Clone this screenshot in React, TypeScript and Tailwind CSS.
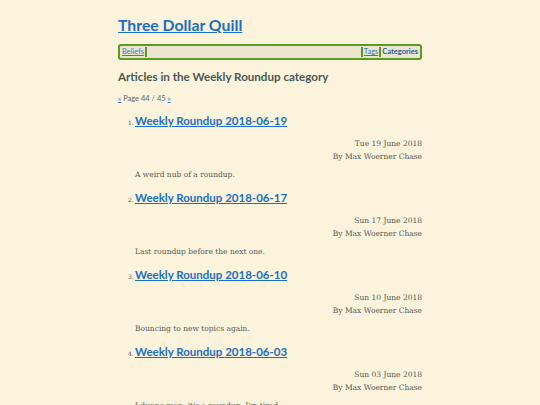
import React from "react";

const items = [
  { t: "Weekly Roundup 2018-06-19", d: "Tue 19 June 2018", s: "A weird nub of a roundup." },
  { t: "Weekly Roundup 2018-06-17", d: "Sun 17 June 2018", s: "Last roundup before the next one." },
  { t: "Weekly Roundup 2018-06-10", d: "Sun 10 June 2018", s: "Bouncing to new topics again." },
  { t: "Weekly Roundup 2018-06-03", d: "Sun 03 June 2018", s: "I dunno man, it's a roundup. I'm tired." },
];

const sans = "font-['Lato','Open_Sans',sans-serif]";
const serif = "font-['DejaVu_Serif','Liberation_Serif',serif]";

export default function App() {
  return (
    <div className="min-h-[405px] w-[540px] bg-[#fbf3db] overflow-hidden">
      <div className="mx-auto w-[304px] pt-[14px]">
        <h1 className={`${sans} text-[15.8px] font-bold leading-[22px] text-[#1c6fc4] underline`}>
          Three Dollar Quill
        </h1>
        <nav className={`${sans} mt-[8px] flex h-[16px] items-center rounded-[3px] border-[2px] border-[#5a9a1e] bg-[#ebe4cf] px-[2px] text-[7.5px] leading-none`}>
          <a className="text-[#3c7bbf] underline">Beliefs</a>
          <span className="ml-[1px] h-[10px] w-[2px] bg-[#5a9a1e]" />
          <span className="flex-1" />
          <span className="mr-[1px] h-[10px] w-[2px] bg-[#5a9a1e]" />
          <a className="text-[#3c7bbf] underline">Tags</a>
          <span className="mx-[1px] h-[10px] w-[2px] bg-[#5a9a1e]" />
          <span className="font-bold text-[#2a5ea0]">Categories</span>
        </nav>
        <h2 className={`${sans} mt-[9px] text-[11.6px] font-bold leading-[16px] text-[#4a5955]`}>
          Articles in the Weekly Roundup category
        </h2>
        <p className={`${sans} mt-[9px] text-[7.5px] leading-[10px] text-[#666660]`}>
          <a className="text-[#3c7bbf] underline">«</a> Page 44 / 45{" "}
          <a className="text-[#3c7bbf] underline">»</a>
        </p>
        <ol className="mt-[8px] pl-[17px]">
          {items.map((it, i) => (
            <li key={i} className="h-[77px]">
              <div className="flex items-baseline">
                <span className={`${serif} -ml-[7px] w-[7px] text-[6px] text-[#555]`}>{i + 1}.</span>
                <a className={`${sans} text-[11.5px] font-bold leading-[18px] text-[#1c6fc4] underline`}>
                  {it.t}
                </a>
              </div>
              <div className={`${serif} mt-[7px] text-right text-[7.5px] leading-[13px] text-[#5a5a56]`}>
                <div>{it.d}</div>
                <div>By Max Woerner Chase</div>
              </div>
              <p className={`${serif} mt-[6px] text-[7.5px] leading-[12px] text-[#5a5a56]`}>{it.s}</p>
            </li>
          ))}
        </ol>
      </div>
    </div>
  );
}
